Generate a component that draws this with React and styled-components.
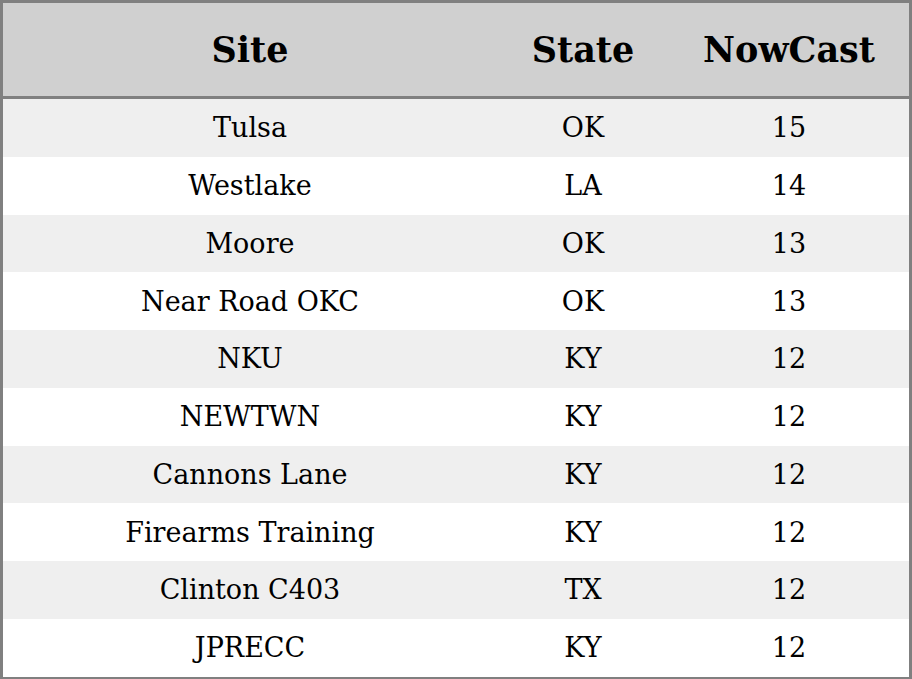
import React from "react";
import styled, { createGlobalStyle } from "styled-components";

const Global = createGlobalStyle`
  html, body { margin: 0; padding: 0; background: #fff; }
  body { font-family: "DejaVu Serif", serif; }
`;

const Table = styled.table`
  width: 912px;
  border-collapse: collapse;
  border: 3px solid #808080;
  font-family: "DejaVu Serif", serif;
  color: #000;
`;

const HeadCell = styled.th`
  background: #d0d0d0;
  font-size: 35px;
  font-weight: bold;
  height: 93px;
  padding: 0;
  text-align: center;
  border-bottom: 3px solid #808080;
  width: ${(p) => p.$w}px;
`;

const Row = styled.tr`
  background: ${(p) => (p.$odd ? "#efefef" : "#ffffff")};
`;

const Cell = styled.td`
  font-size: 27px;
  height: 57.75px;
  padding: 0;
  text-align: center;
`;

const rows = [
  ["Tulsa", "OK", 15],
  ["Westlake", "LA", 14],
  ["Moore", "OK", 13],
  ["Near Road OKC", "OK", 13],
  ["NKU", "KY", 12],
  ["NEWTWN", "KY", 12],
  ["Cannons Lane", "KY", 12],
  ["Firearms Training", "KY", 12],
  ["Clinton C403", "TX", 12],
  ["JPRECC", "KY", 12],
];

export default function App() {
  return (
    <>
      <Global />
      <Table>
        <thead>
          <tr>
            <HeadCell $w={494}>Site</HeadCell>
            <HeadCell $w={172}>State</HeadCell>
            <HeadCell $w={240}>NowCast</HeadCell>
          </tr>
        </thead>
        <tbody>
          {rows.map((r, i) => (
            <Row key={i} $odd={i % 2 === 0}>
              <Cell>{r[0]}</Cell>
              <Cell>{r[1]}</Cell>
              <Cell>{r[2]}</Cell>
            </Row>
          ))}
        </tbody>
      </Table>
    </>
  );
}
